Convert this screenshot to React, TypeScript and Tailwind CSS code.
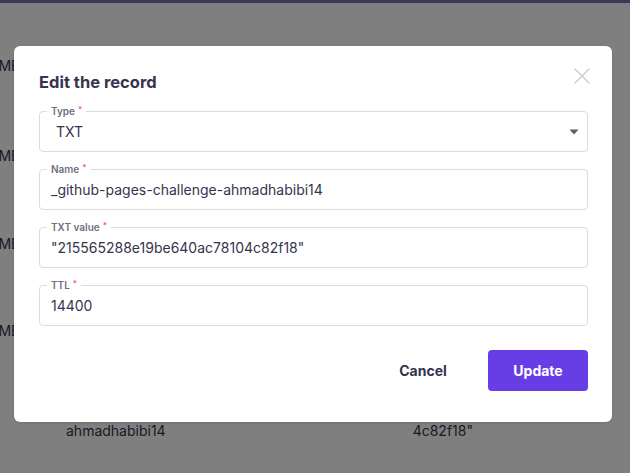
import { X } from "lucide-react";

const rows = [
  { top: "mt-[53px]" },
  { top: "mt-[70px]" },
  { top: "mt-[68px]" },
  { top: "mt-[67px]" },
];

function Field({ label, value, select }: { label: string; value: string; select?: boolean }) {
  return (
    <div className="relative h-[41px] rounded-[4px] border border-[#dcdce0] flex items-center">
      <span className="absolute -top-[7px] left-[7px] bg-white px-1 text-[10px] leading-[12px] font-semibold text-[#6d7081]">
        {label}
        <span className="ml-[3px] align-top text-[8px] leading-[8px] text-[#fc5185]">*</span>
      </span>
      <span className={`${select ? "pl-4" : "pl-[11px]"} text-[14px] text-[#36344d]`}>{value}</span>
      {select && (
        <svg className="absolute right-[8px] top-[17px]" width="10" height="6" viewBox="0 0 10 6">
          <path d="M0.5 0.5 L9.5 0.5 L5 5.5 Z" fill="#5e5d6f" />
        </svg>
      )}
    </div>
  );
}

export default function App() {
  return (
    <div className="relative h-[473px] w-[630px] overflow-hidden bg-white font-['Inter',sans-serif]">
      <div className="h-[3px] bg-[#3a3857]" />
      <div className="flex flex-col text-[14px] text-[#36344d]">
        {rows.map((r, i) => (
          <div key={i} className={`${r.top} -ml-[32px] leading-[20px]`}>
            CNAME
          </div>
        ))}
        <div className="mt-[80px] flex leading-[20px]">
          <span className="ml-[66px]">ahmadhabibi14</span>
          <span className="ml-[247px]">4c82f18"</span>
        </div>
      </div>

      <div className="absolute inset-0 top-[3px] bg-black/50" />

      <div className="absolute inset-0 flex items-start pl-[14px] pt-[46px]">
        <div className="relative w-[598px] rounded-[6px] bg-white pl-[25px] pr-6 pt-6 pb-[31px] shadow-sm">
          <button className="absolute right-[16px] top-[16px] text-[#c9c9d1]">
            <X size={28} strokeWidth={1.1} />
          </button>
          <h2 className="text-[16.5px] font-bold leading-[24px] text-[#36344d]">Edit the record</h2>
          <div className="mt-[17px] flex flex-col gap-[17px]">
            <Field label="Type" value="TXT" select />
            <Field label="Name" value="_github-pages-challenge-ahmadhabibi14" />
            <Field label="TXT value" value={'"215565288e19be640ac78104c82f18"'} />
            <Field label="TTL" value="14400" />
          </div>
          <div className="mt-6 flex justify-end gap-[15px]">
            <button className="h-[41px] w-[100px] rounded-[4px] text-[14px] font-bold text-[#36344d]">Cancel</button>
            <button className="h-[41px] w-[100px] rounded-[4px] bg-[#673de6] text-[14px] font-bold text-white">
              Update
            </button>
          </div>
        </div>
      </div>
    </div>
  );
}
